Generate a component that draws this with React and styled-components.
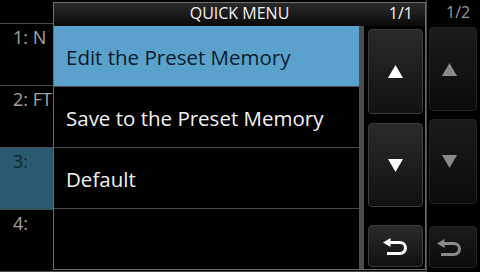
import React from "react";
import styled, { createGlobalStyle } from "styled-components";

const Global = createGlobalStyle`
  html, body { margin: 0; padding: 0; background: #000; }
  body { width: 480px; height: 272px; overflow: hidden; font-family: "Open Sans", "Noto Sans", sans-serif; }
  * { box-sizing: border-box; }
`;

const Screen = styled.div`
  position: relative;
  width: 480px;
  height: 272px;
  background: #000;
  display: grid;
  grid-template-columns: 426px 54px;
  overflow: hidden;
`;

const MainCol = styled.div`
  display: flex;
  flex-direction: column;
`;

const BgHeader = styled.div`
  height: 24px;
  border-bottom: 1px solid #4a4a4a;
`;

const BgRow = styled.div`
  height: 62px;
  border-bottom: 1px solid #4a4a4a;
  background: ${(p) => (p.$active ? "#2a5a70" : "#000")};
  color: ${(p) => (p.$active ? "#0e2536" : "#a3a3a3")};
  font-size: 18px;
  padding: 1px 0 0 13px;
  white-space: nowrap;
`;

const SideCol = styled.div`
  border-left: 1px solid #4a4a4a;
  display: flex;
  flex-direction: column;
  padding: 0 3px 4px 2px;
`;

const SideHeader = styled.div`
  height: 27px;
  color: #9a9a9a;
  font-size: 16px;
  line-height: 24px;
  padding-left: 17px;
`;

const SideButton = styled.div`
  height: ${(p) => p.$h}px;
  margin-top: ${(p) => p.$mt}px;
  border-radius: 4px;
  border: 1px solid #232323;
  background: linear-gradient(#1b1b1b, #0b0b0b);
  display: flex;
  align-items: center;
  justify-content: center;
  padding-right: 7px;
  color: #8a8a8a;
`;

const Popup = styled.div`
  position: absolute;
  left: 53px;
  top: 2px;
  width: 373px;
  height: 268px;
  border: 1px solid #6c6c6c;
  background: #000;
  display: flex;
  flex-direction: column;
`;

const PopHeader = styled.div`
  height: 23px;
  background: linear-gradient(#2a2a2a, #0a0a0a);
  color: #f2f2f2;
  font-size: 16px;
  display: grid;
  grid-template-columns: 1fr auto 1fr;
  align-items: start;
  line-height: 20px;
`;

const Title = styled.div`
  grid-column: 2;
`;

const PageNum = styled.div`
  grid-column: 3;
  justify-self: end;
  padding-right: 12px;
`;

const PopBody = styled.div`
  flex: 1;
  display: flex;
  min-height: 0;
`;

const List = styled.div`
  width: 305px;
  display: flex;
  flex-direction: column;
`;

const Item = styled.div`
  height: 61px;
  flex: ${(p) => (p.$last ? 1 : "none")};
  border-bottom: ${(p) => (p.$last ? "none" : "1px solid #4a4a4a")};
  background: ${(p) => (p.$active ? "#5aa2cb" : "#000")};
  color: ${(p) => (p.$active ? "#0b1b2e" : "#f2f2f2")};
  font-size: 20.5px;
  display: flex;
  align-items: center;
  padding: 1px 0 0 12px;
  white-space: nowrap;
`;

const Scrollbar = styled.div`
  width: 5px;
  background: #4d4d4d;
`;

const ButtonCol = styled.div`
  flex: 1;
  display: flex;
  flex-direction: column;
  padding: 3px 2px 2px 4px;
`;

const PopButton = styled.div`
  height: ${(p) => p.$h}px;
  margin-top: ${(p) => p.$mt}px;
  border-radius: 4px;
  border: 1px solid #3c3c3c;
  background: linear-gradient(#2a2a2a, #111);
  display: flex;
  align-items: center;
  justify-content: center;
  color: #fff;
`;

const Tri = ({ down }) => (
  <svg width="15" height="13" viewBox="0 0 15 13">
    <polygon points={down ? "0,0 15,0 7.5,13" : "7.5,0 15,13 0,13"} fill="currentColor" />
  </svg>
);

const Back = () => (
  <svg width="25" height="17" viewBox="0 0 25 17">
    <polygon points="0,4.5 7.5,0 7.5,9" fill="currentColor" />
    <path d="M6 4.5 H17 A5.5 5.5 0 0 1 17 15.5 H4" fill="none" stroke="currentColor" strokeWidth="3" />
  </svg>
);

export default function App() {
  return (
    <>
      <Global />
      <Screen>
        <MainCol>
          <BgHeader />
          <BgRow>1: N</BgRow>
          <BgRow>2: FT</BgRow>
          <BgRow $active>3:</BgRow>
          <BgRow>4:</BgRow>
        </MainCol>
        <SideCol>
          <SideHeader>1/2</SideHeader>
          <SideButton $h={84} $mt={0}><Tri /></SideButton>
          <SideButton $h={85} $mt={8}><Tri down /></SideButton>
          <SideButton $h={42} $mt={22}><Back /></SideButton>
        </SideCol>
        <Popup>
          <PopHeader>
            <Title>QUICK MENU</Title>
            <PageNum>1/1</PageNum>
          </PopHeader>
          <PopBody>
            <List>
              <Item $active>Edit the Preset Memory</Item>
              <Item>Save to the Preset Memory</Item>
              <Item>Default</Item>
              <Item $last />
            </List>
            <Scrollbar />
            <ButtonCol>
              <PopButton $h={85} $mt={0}><Tri /></PopButton>
              <PopButton $h={84} $mt={9}><Tri down /></PopButton>
              <PopButton $h={42} $mt={18}><Back /></PopButton>
            </ButtonCol>
          </PopBody>
        </Popup>
      </Screen>
    </>
  );
}
